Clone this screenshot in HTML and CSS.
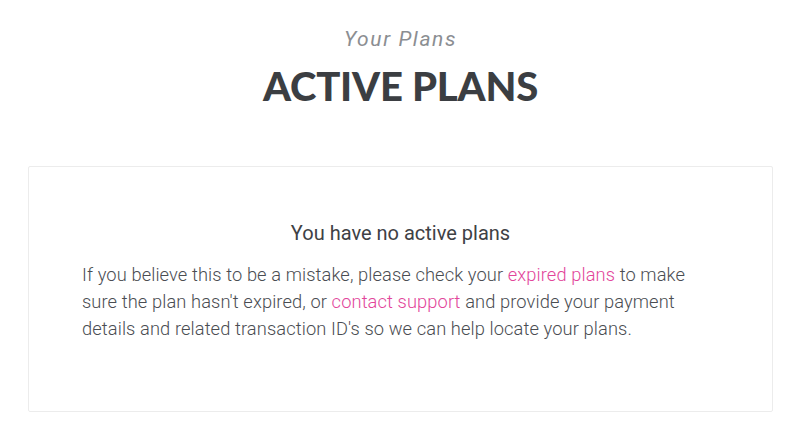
FILE: index.html
```html
<!DOCTYPE html>
<html>
<head>
<meta charset="utf-8">
<link rel="stylesheet" href="styles.css">
</head>
<body>
<div class="page">
  <header class="head">
    <div class="eyebrow">Your Plans</div>
    <h1 class="title">ACTIVE PLANS</h1>
  </header>
  <section class="card">
    <h2 class="card-title">You have no active plans</h2>
    <p class="card-text">If you believe this to be a mistake, please check your <a href="#">expired plans</a> to make sure the plan hasn't expired, or <a href="#">contact support</a> and provide your payment details and related transaction ID's so we can help locate your plans.</p>
  </section>
</div>
</body>
</html>
```
FILE: styles.css
```css
html, body { margin: 0; padding: 0; background: #fff; }
body { font-family: Roboto, "Liberation Sans", sans-serif; color: #44474c; }
.page { padding: 26px 27px 0 28px; }
.head { text-align: center; }
.eyebrow { font-style: italic; font-size: 21px; color: #8b8e92; letter-spacing: 1.6px; line-height: 26px; }
.title { margin: 12px 0 0 0; font-family: Lato, sans-serif; font-weight: 900; font-size: 40px; line-height: 44px; color: #3b3e42; letter-spacing: -0.2px; }
.card { margin-top: 58px; border: 1px solid #ececec; border-radius: 2px; height: 246px; box-sizing: border-box; padding: 53px 53px 0 53px; }
.card-title { margin: 0; text-align: center; font-weight: 400; font-size: 20px; line-height: 26px; color: #3e4145; }
.card-text { margin: 15px 0 0 0; max-width: 622px; font-weight: 300; font-size: 18.3px; line-height: 27px; letter-spacing: 0.1px; color: #4a4d52; }
.card-text a { color: #e2459a; text-decoration: none; }
```
